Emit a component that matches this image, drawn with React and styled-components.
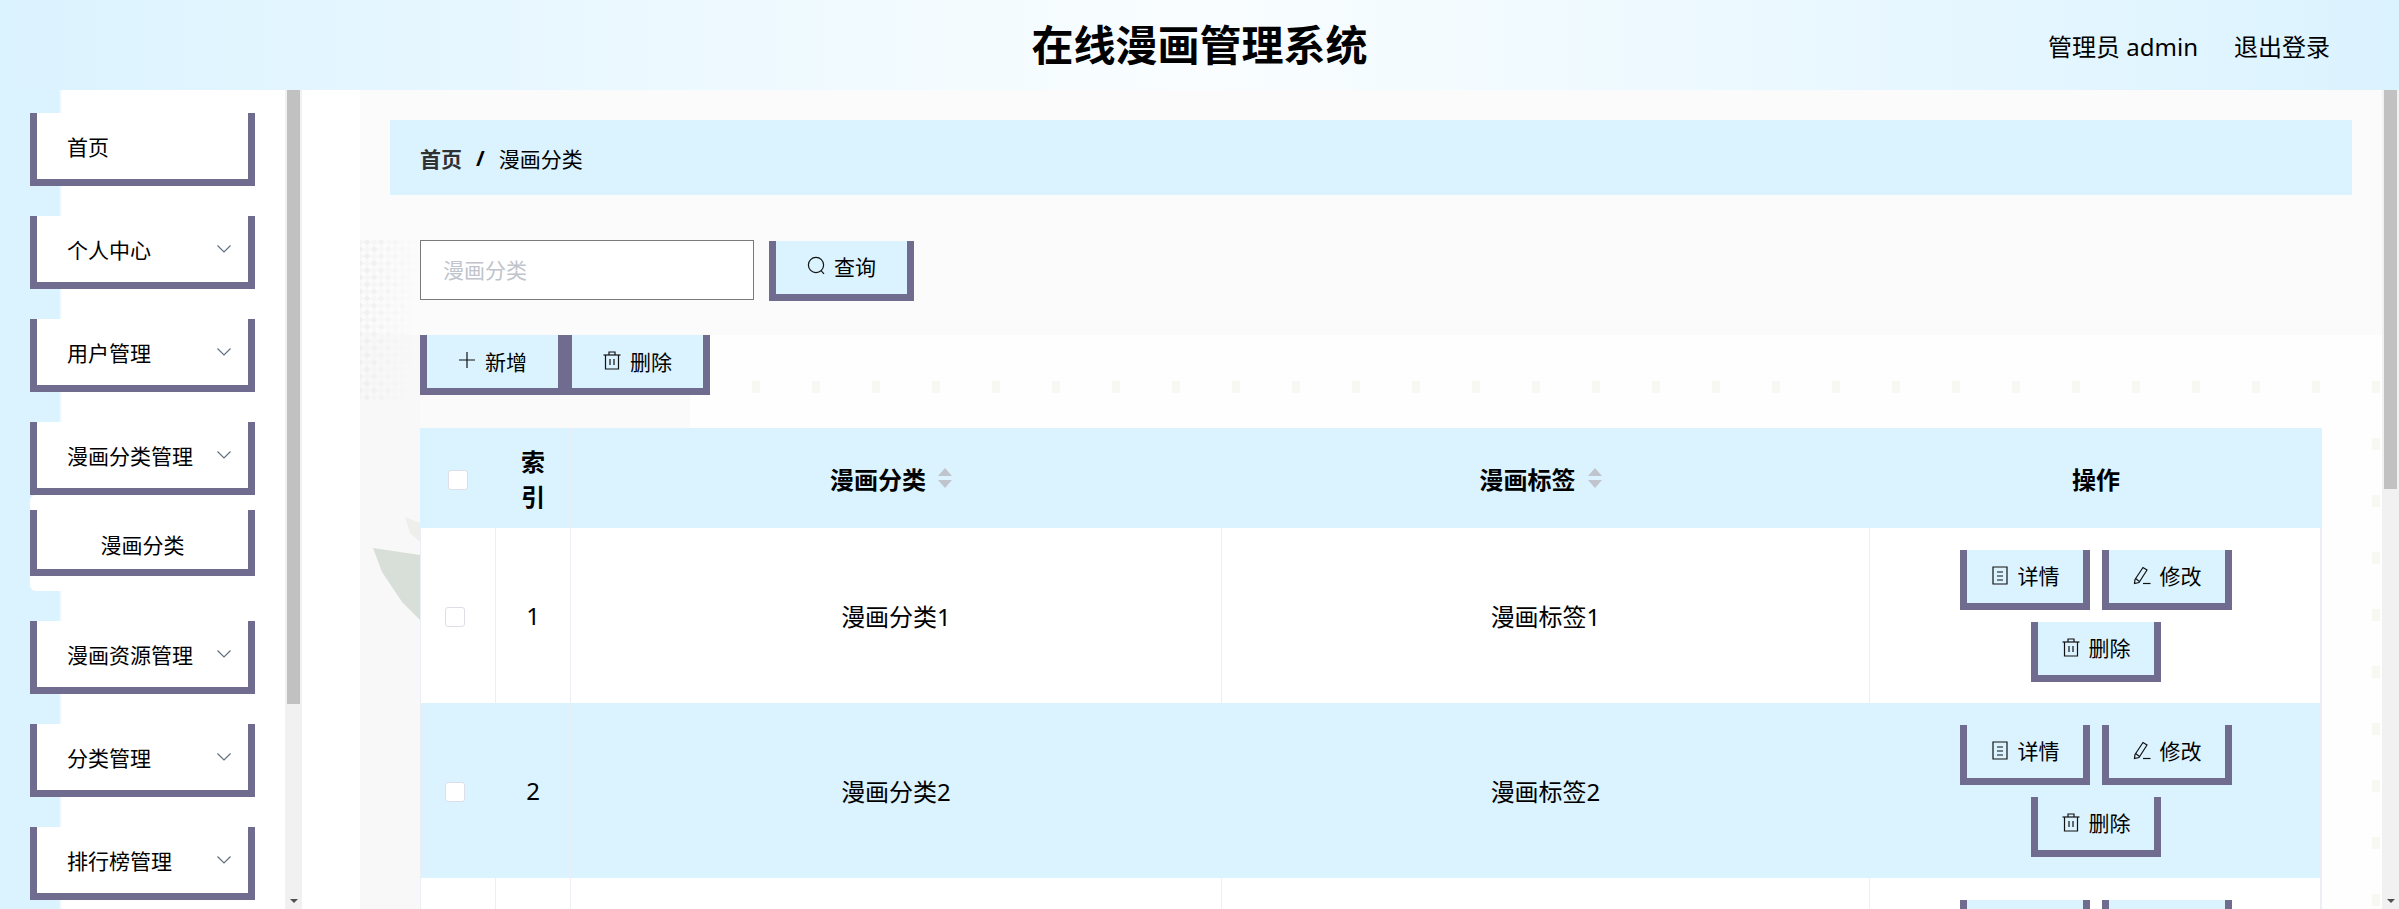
import * as React from 'react';
import styled, { createGlobalStyle } from 'styled-components';

const BLUE = '#dbf3ff';
const PURPLE = '#6f6c8f';
const LINE = '#ebeef5';

const menus = [
  { name: '首页' },
  { name: '个人中心', arrow: true },
  { name: '用户管理', arrow: true },
  { name: '漫画分类管理', arrow: true, children: ['漫画分类'] },
  { name: '漫画资源管理', arrow: true },
  { name: '分类管理', arrow: true },
  { name: '排行榜管理', arrow: true },
];

const rows = [
  { id: 1, category: '漫画分类1', tag: '漫画标签1' },
  { id: 2, category: '漫画分类2', tag: '漫画标签2' },
  { id: 3, category: '漫画分类3', tag: '漫画标签3' },
];

function Arrow() {
  return (
    <ArrowIcon viewBox="0 0 14 8">
      <polyline points="0.5,0.5 7,7 13.5,0.5" fill="none" stroke="#5f6f80" strokeWidth="1.2" />
    </ArrowIcon>
  );
}

const icons = {
  search: (
    <>
      <circle cx="9" cy="9" r="7.6" />
      <path d="M14 14.6 L17 17.8" />
    </>
  ),
  plus: <path d="M9 1 V17 M1 9 H17" />,
  trash: (
    <>
      <path d="M0.5 4 H17.5" />
      <path d="M6 4 V1 H12 V4" />
      <path d="M2.5 4 V18 H15.5 V4" />
      <path d="M7 8 V14 M11 8 V14" />
    </>
  ),
  detail: (
    <>
      <path d="M2 1 H16 V18 H2 Z" />
      <path d="M6 6 H12 M6 10 H12 M6 14 H12" />
    </>
  ),
  edit: (
    <>
      <path d="M2 13.5 L10 1.5 L14 4 L6 16.5 L1.5 17.5 Z" />
      <path d="M2.5 12.5 L6.5 15.5" />
      <path d="M10 17.5 H17.5" />
    </>
  ),
};

function Icon({ name }) {
  return <IconSvg viewBox="0 0 18 19">{icons[name]}</IconSvg>;
}

function ScrollBar({ thumb }) {
  return (
    <Rail>
      <Thumb $height={thumb} />
      <RailArrow />
    </Rail>
  );
}

function Backdrop() {
  return (
    <BackdropSvg aria-hidden="true">
      <defs>
        <pattern id="dots" x="392" y="291" width="60" height="57" patternUnits="userSpaceOnUse">
          <rect width="8" height="12" fill="#f8f8f3" />
        </pattern>
        <pattern id="checks" width="10" height="10" patternUnits="userSpaceOnUse" patternTransform="rotate(45)">
          <rect width="5" height="5" fill="#e9ece9" />
          <rect x="5" y="5" width="5" height="5" fill="#f1f3f1" />
        </pattern>
        <linearGradient id="fade" x1="0" x2="1" y1="0" y2="0.4">
          <stop offset="0" stopColor="#fff" stopOpacity="0.9" />
          <stop offset="1" stopColor="#fff" stopOpacity="0" />
        </linearGradient>
        <mask id="fadeMask">
          <rect width="60" height="400" fill="url(#fade)" />
        </mask>
      </defs>
      <rect x="0" y="0" width="2022" height="245" fill="#fbfbfb" />
      <rect x="0" y="245" width="330" height="95" fill="#fafafa" />
      <rect x="0" y="245" width="60" height="1400" fill="#f8f8f8" />
      <rect x="0" y="150" width="60" height="160" fill="url(#checks)" mask="url(#fadeMask)" />
      <rect x="385" y="290" width="1640" height="1200" fill="url(#dots)" />
      <polygon points="13,458 60,465 60,530 42,512 22,482" fill="#d8dfd8" />
      <polygon points="45,427 60,433 60,452 50,443" fill="#eeeeec" />
    </BackdropSvg>
  );
}

export default function App() {
  return (
    <>
      <GlobalStyle />
      <Page>
        <Header>
          <span />
          <Title>在线漫画管理系统</Title>
          <HeaderRight>
            <span>管理员 admin</span>
            <span>退出登录</span>
          </HeaderRight>
        </Header>
        <Body>
          <Sidebar>
            <Menu>
              {menus.map(menu => (
                <MenuGroup key={menu.name}>
                  <MenuItem>
                    {menu.name}
                    {menu.arrow && <Arrow />}
                  </MenuItem>
                  {menu.children && (
                    <SubMenu>
                      {menu.children.map(child => (
                        <SubItem key={child}>{child}</SubItem>
                      ))}
                    </SubMenu>
                  )}
                </MenuGroup>
              ))}
            </Menu>
            <ScrollBar thumb={614} />
          </Sidebar>
          <Main>
            <Gutter>
              <Canvas>
                <Backdrop />
                <Breadcrumb>
                  <Crumb>首页</Crumb>
                  <Separator>/</Separator>
                  <span>漫画分类</span>
                </Breadcrumb>
                <Form>
                  <SearchRow>
                    <SearchInput placeholder="漫画分类" />
                    <Button $width={145} $raised>
                      <Icon name="search" />
                      查询
                    </Button>
                  </SearchRow>
                  <Toolbar>
                    <Button $width={145}>
                      <Icon name="plus" />
                      新增
                    </Button>
                    <Button $width={145}>
                      <Icon name="trash" />
                      删除
                    </Button>
                  </Toolbar>
                  <Table>
                    <colgroup>
                      <col width="76" />
                      <col width="75" />
                      <col width="651" />
                      <col width="648" />
                      <col width="452" />
                    </colgroup>
                    <thead>
                      <HeadRow>
                        <HeadCell>
                          <CheckBox $x={0} $y={2} />
                        </HeadCell>
                        <HeadCell>
                          <IndexLabel>索引</IndexLabel>
                        </HeadCell>
                        <HeadCell>
                          <SortLabel>
                            漫画分类
                            <SortCaret />
                          </SortLabel>
                        </HeadCell>
                        <HeadCell>
                          <SortLabel>
                            漫画标签
                            <SortCaret />
                          </SortLabel>
                        </HeadCell>
                        <HeadCell>操作</HeadCell>
                      </HeadRow>
                    </thead>
                    <tbody>
                      {rows.map((row, i) => (
                        <Row key={row.id} $striped={i % 2 === 1}>
                          <Cell>
                            <CheckBox $x={-3} $y={1} />
                          </Cell>
                          <Cell>{row.id}</Cell>
                          <Cell>{row.category}</Cell>
                          <Cell>{row.tag}</Cell>
                          <Cell>
                            <Actions>
                              <Button $width={130}>
                                <Icon name="detail" />
                                详情
                              </Button>
                              <Button $width={130}>
                                <Icon name="edit" />
                                修改
                              </Button>
                              <Button $width={130}>
                                <Icon name="trash" />
                                删除
                              </Button>
                            </Actions>
                          </Cell>
                        </Row>
                      ))}
                    </tbody>
                  </Table>
                </Form>
              </Canvas>
            </Gutter>
            <ScrollBar thumb={399} />
          </Main>
        </Body>
      </Page>
    </>
  );
}

const GlobalStyle = createGlobalStyle`
  html, body {
    margin: 0;
    height: 100%;
    overflow: hidden;
  }

  body {
    font-family: "Noto Sans", "Noto Sans CJK SC", sans-serif;
    font-size: 21px;
    color: #000;
  }

  #root {
    height: 100%;
  }
`;

const Page = styled.div`
  display: flex;
  flex-direction: column;
  height: 100%;
`;

const Header = styled.header`
  flex: none;
  height: 90px;
  display: grid;
  grid-template-columns: 1fr auto 1fr;
  align-items: center;
  background: linear-gradient(90deg, ${BLUE} 0%, #f9fdff 50%, ${BLUE} 100%);
`;

const Title = styled.h1`
  margin: 0;
  font-size: 42px;
  font-weight: 700;
  line-height: 1;
`;

const HeaderRight = styled.div`
  display: flex;
  justify-content: flex-end;
  gap: 36px;
  padding-right: 69px;
  font-size: 24px;
`;

const Body = styled.div`
  flex: 1;
  display: flex;
  min-height: 0;
`;

const Sidebar = styled.aside`
  flex: none;
  width: 302px;
  display: flex;
  background: linear-gradient(90deg, ${BLUE} 59px, #fff 62px);
`;

const Menu = styled.nav`
  flex: 1;
  overflow: hidden;
  padding: 23px 0 0 30px;
`;

const Rail = styled.div`
  flex: none;
  width: 17px;
  box-sizing: border-box;
  display: flex;
  flex-direction: column;
  justify-content: space-between;
  align-items: center;
  padding-bottom: 6px;
  background: #f1f1f1;
`;

const Thumb = styled.div`
  width: 13px;
  height: ${p => p.$height}px;
  background: #c1c1c1;
`;

const RailArrow = styled.div`
  width: 0;
  height: 0;
  border: 4px solid transparent;
  border-bottom: 0;
  border-top: 4px solid #505050;
`;

const MenuGroup = styled.div`
  width: 225px;
  margin-bottom: 30px;
`;

const MenuItem = styled.div`
  height: 73px;
  box-sizing: border-box;
  display: flex;
  align-items: center;
  justify-content: space-between;
  padding: 0 17px 0 30px;
  background: #fff;
  border: 7px solid ${PURPLE};
  border-top: 0;
`;

const ArrowIcon = styled.svg`
  width: 14px;
  height: 8px;
`;

const SubMenu = styled.div`
  padding: 15px 0;
  background: #fff;
  border-radius: 6px;
`;

const SubItem = styled.div`
  height: 66px;
  box-sizing: border-box;
  display: flex;
  align-items: center;
  justify-content: center;
  padding-top: 9px;
  border: 7px solid ${PURPLE};
  border-top: 0;
`;

const Main = styled.main`
  flex: 1;
  min-width: 0;
  display: flex;
`;

const Gutter = styled.div`
  flex: 1;
  min-width: 0;
  padding-left: 58px;
  background: #fff;
`;

const Canvas = styled.div`
  position: relative;
  height: 100%;
  box-sizing: border-box;
  overflow: hidden;
  padding: 30px;
  background: #fefefe;
`;

const BackdropSvg = styled.svg`
  position: absolute;
  top: 0;
  left: 0;
  width: 100%;
  height: 100%;
`;

const Breadcrumb = styled.div`
  position: relative;
  height: 75px;
  display: flex;
  align-items: center;
  padding-left: 30px;
  margin-bottom: 45px;
  background: ${BLUE};
`;

const Crumb = styled.span`
  font-weight: 700;
  color: #303133;
`;

const Separator = styled.span`
  margin: 0 14px;
  font-weight: 700;
`;

const Form = styled.div`
  position: relative;
  padding: 0 30px;
`;

const SearchRow = styled.div`
  display: flex;
  align-items: flex-start;
  gap: 15px;
  height: 95px;
`;

const SearchInput = styled.input`
  width: 334px;
  height: 60px;
  box-sizing: border-box;
  padding: 0 22px;
  font: inherit;
  background: #fff;
  border: 1px solid #7a7a7a;
  outline: 0;

  &::placeholder {
    color: #c0c4cc;
    opacity: 1;
  }
`;

const Button = styled.button`
  flex: none;
  width: ${p => p.$width}px;
  height: 60px;
  box-sizing: border-box;
  margin-top: ${p => (p.$raised ? '1px' : '0')};
  display: inline-flex;
  align-items: center;
  justify-content: center;
  gap: 9px;
  padding: 0 0 ${p => (p.$raised ? '4px' : '2px')};
  font: inherit;
  font-size: 21px;
  color: #000;
  background: ${BLUE};
  border: 7px solid ${PURPLE};
  border-top: 0;
`;

const IconSvg = styled.svg`
  width: 18px;
  height: 19px;
  fill: none;
  stroke: #111;
  stroke-width: 1.2;
`;

const Toolbar = styled.div`
  display: flex;
  height: 93px;
`;

const Table = styled.table`
  width: 1902px;
  table-layout: fixed;
  border-collapse: separate;
  border-spacing: 0;
  font-size: 24px;
  background: #fff;
  text-align: center;
`;

const HeadRow = styled.tr`
  height: 100px;
  background: ${BLUE};
`;

const HeadCell = styled.th`
  padding: 0;
  font-weight: 700;
  border-right: 1px solid ${LINE};

  &:last-child {
    border-right: 0;
  }
`;

const IndexLabel = styled.div`
  width: 30px;
  margin: 0 auto;
  padding-top: 2px;
  line-height: 35px;
`;

const SortLabel = styled.span`
  display: inline-flex;
  align-items: center;
`;

const SortCaret = styled.i`
  position: relative;
  width: 36px;
  height: 20px;

  &::before,
  &::after {
    content: '';
    position: absolute;
    left: 12px;
    border: 7px solid transparent;
  }

  &::before {
    top: 0;
    border-top: 0;
    border-bottom: 8px solid #c0c4cc;
  }

  &::after {
    bottom: 0;
    border-bottom: 0;
    border-top: 8px solid #c0c4cc;
  }
`;

const Row = styled.tr`
  height: 175px;
  background: ${p => (p.$striped ? BLUE : '#fff')};
`;

const Cell = styled.td`
  padding: 0;
  border-right: 1px solid ${LINE};

  &:first-child {
    border-left: 1px solid ${LINE};
  }

  &:last-child {
    border-right: 2px solid ${LINE};
  }
`;

const CheckBox = styled.span`
  display: block;
  width: 20px;
  height: 20px;
  box-sizing: border-box;
  margin: 0 auto;
  transform: translate(${p => p.$x}px, ${p => p.$y}px);
  background: #fff;
  border: 1px solid #dcdfe6;
  border-radius: 3px;
`;

const Actions = styled.div`
  display: flex;
  flex-wrap: wrap;
  justify-content: center;
  gap: 12px;
  padding: 0 39px 0 41px;
`;
